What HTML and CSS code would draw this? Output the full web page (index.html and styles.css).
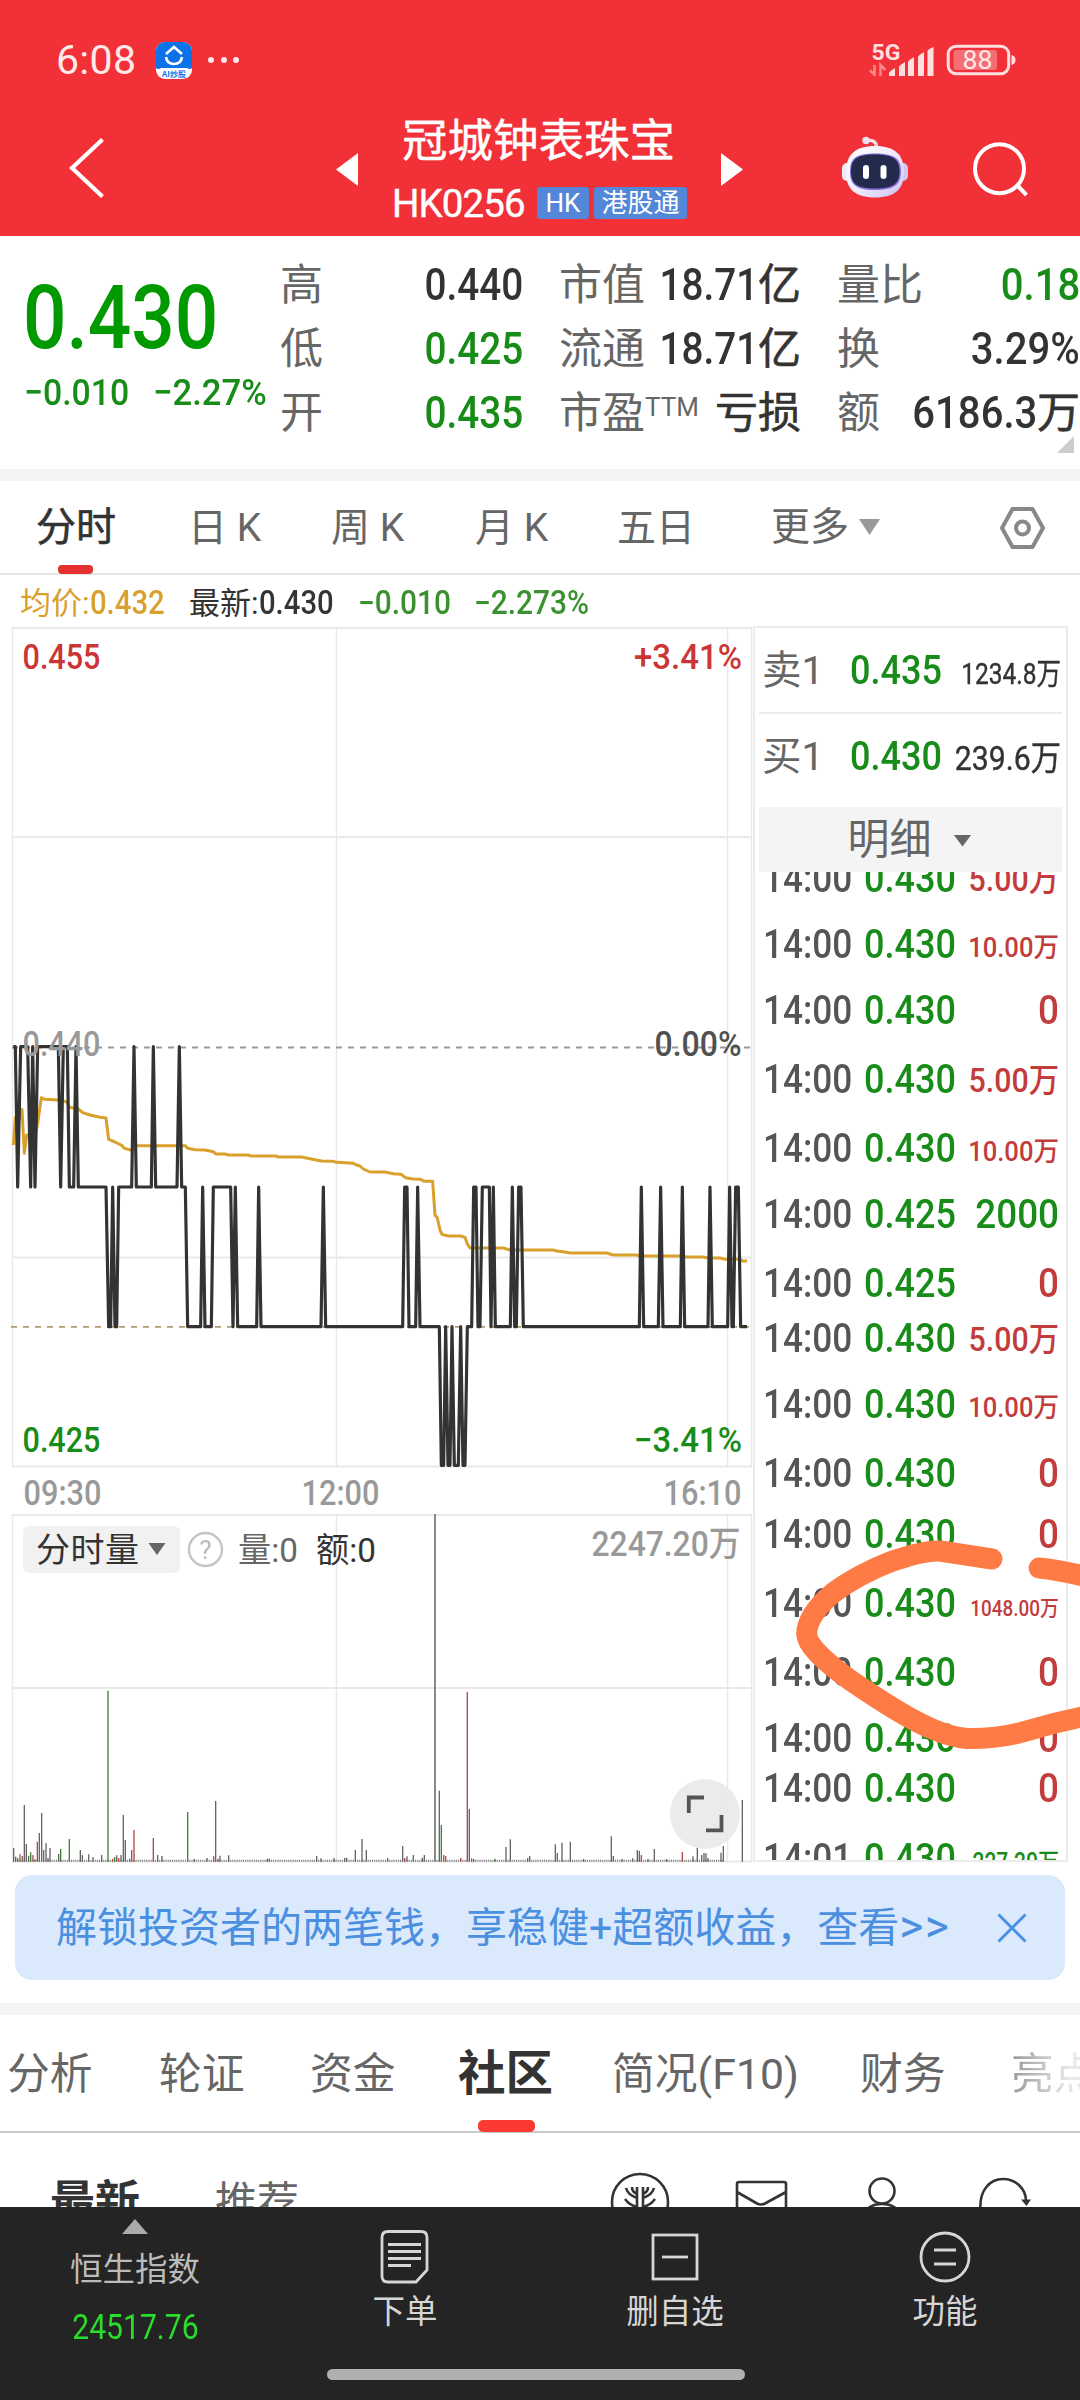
FILE: index.html
```html
<!DOCTYPE html>
<html lang="zh-CN">
<head>
<meta charset="utf-8">
<title>冠城钟表珠宝 HK0256</title>
<link rel="stylesheet" href="styles.css">
</head>
<body>
<div class="app">
  <header class="header">
    <div class="status">
      <span class="clock">6:08</span>
      <svg class="status-app" width="36" height="37" viewBox="0 0 36 37"><rect width="36" height="37" rx="9" fill="#fff"/><path d="M0 26V9a9 9 0 0 1 9-9h18a9 9 0 0 1 9 9v17q-2 2-5 0H5q-3 2-5 0z" fill="#0b72e7"/><path d="M10 12l8-7 8 7M10 15q1 7 8 7t8-7" fill="none" stroke="#fff" stroke-width="2.6"/><text x="18" y="34.5" class="tiny-label" text-anchor="middle">AI炒股</text></svg>
      <svg class="dots" width="34" height="8" viewBox="0 0 34 8" fill="#ffe9e9"><circle cx="4" cy="4" r="3"/><circle cx="17" cy="4" r="3"/><circle cx="29" cy="4" r="3"/></svg>
      <svg class="signal" width="66" height="40" viewBox="868 39 66 40" fill="#ffdfe0"><text x="871.500" y="58.500" class="net" textLength="29" lengthAdjust="spacingAndGlyphs">5G</text><path d="M870 69.500l4 3.500M874.500 64V75M880.500 75V64l5 5" stroke="#ffdfe0" stroke-width="2.600" fill="none" opacity=".5"/><path d="M889 75V72q0-1.500 6-5V75zM899 75V66q0-1.500 6-5V75zM908 75V61q0-1.500 6-5V75zM918 75V56q0-1.500 6-5V75zM927.500 75V50q0-1.500 6-4V75z"/></svg>
      <svg class="battery" width="70" height="32" viewBox="946 44 70 32"><rect x="948.200" y="46.200" width="60.500" height="27.500" rx="8" fill="none" stroke="#ffdfe0" stroke-width="3"/><rect x="953.500" y="50" width="43.500" height="20" rx="3" fill="#fff" opacity=".3"/><path d="M1011.500 55q4 1 4 5t-4 5z" fill="#ffdfe0"/><text x="962.500" y="69" class="pct" textLength="30" lengthAdjust="spacingAndGlyphs">88</text></svg>
    </div>
    <div class="titlebar">
      <svg class="back" width="42" height="62" viewBox="66 137 42 62"><path d="M102.500 139.500L72 168l30.500 28.500" fill="none" stroke="#fff" stroke-width="4.200"/></svg>
      <i class="tri-left"></i>
      <div class="title">
        <h1>冠城钟表珠宝</h1>
        <div class="code-row"><span class="code">HK0256</span><span class="tag tag-hk">HK</span><span class="tag tag-ggt">港股通</span></div>
      </div>
      <i class="tri-right"></i>
      <svg class="robot" width="68" height="66" viewBox="841 134 68 66"><defs><linearGradient id="shell" x1="0" y1="0" x2="1" y2="1"><stop offset="0" stop-color="#fff"/><stop offset=".5" stop-color="#f0ecfc"/><stop offset="1" stop-color="#cdc2f4"/></linearGradient></defs><path d="M867 140.500q9-1 9.500 6" fill="none" stroke="#f6dfea" stroke-width="3.400"/><circle cx="866" cy="140.500" r="3.700" fill="#f6dfea"/><rect x="842" y="163" width="10" height="18" rx="5" fill="#eee9fb"/><rect x="898" y="163" width="10" height="18" rx="5" fill="#cfc6f3"/><path d="M875 146C895 146 904 155 904 172C904 189 895 197.500 875 197.500C855 197.500 846 189 846 172C846 155 855 146 875 146z" fill="url(#shell)"/><path d="M875 153.500C894 153.500 901 158 901 171.500C901 185 894 190 875 190C856 190 850 185 850 171.500C850 158 856 153.500 875 153.500z" fill="#8a6fdc"/><path d="M875 154.500C893 154.500 899.500 159 899.500 171.500C899.500 184 893 188.500 875 188.500C857 188.500 851 184 851 171.500C851 159 857 154.500 875 154.500z" fill="#232b4d"/><rect x="863" y="165" width="6" height="14" rx="3" fill="#fff"/><rect x="880.500" y="165" width="6" height="14" rx="3" fill="#fff"/></svg>
      <svg class="search" width="60" height="60" viewBox="970 139 60 60" fill="none" stroke="#fff" stroke-width="4"><circle cx="999.500" cy="168.700" r="24.500"/><path d="M1016.500 184.500l10 10.500"/></svg>
    </div>
  </header>

  <section class="quote">
    <div class="quote-main">
      <div class="price"><span class="n">0.430</span></div>
      <div class="change"><span class="n chg">−0.010</span><span class="n">−2.27%</span></div>
    </div>
    <dl class="stats">
      <div class="c1"><dt>高</dt><dd><span class="n">0.440</span></dd></div>
      <div class="c2"><dt>市值</dt><dd><span class="n">18.71</span>亿</dd></div>
      <div class="c3"><dt>量比</dt><dd class="down"><span class="n">0.18</span></dd></div>
      <div class="c1"><dt>低</dt><dd class="down"><span class="n">0.425</span></dd></div>
      <div class="c2"><dt>流通</dt><dd><span class="n">18.71</span>亿</dd></div>
      <div class="c3"><dt>换</dt><dd><span class="n">3.29%</span></dd></div>
      <div class="c1"><dt>开</dt><dd class="down"><span class="n">0.435</span></dd></div>
      <div class="c2"><dt>市盈<sup>TTM</sup></dt><dd>亏损</dd></div>
      <div class="c3"><dt>额</dt><dd><span class="n">6186.3</span>万</dd></div>
    </dl>
    <i class="corner"></i>
  </section>

  <nav class="periods">
    <span class="p1 on">分时</span><span class="p2">日 K</span><span class="p3">周 K</span><span class="p4">月 K</span><span class="p5">五日</span><span class="p6">更多<i></i></span>
    <svg width="48" height="46" viewBox="0 0 48 46" fill="none" stroke="#888" stroke-width="4"><path d="M13.500 4h20L44 23 33.500 42h-20L3 23z" stroke-linejoin="round"/><circle cx="23.500" cy="23" r="6.500"/></svg>
  </nav>

  <div class="legend">
    <span class="avg">均价:<b class="n">0.432</b></span><span class="last">最新:<b class="n">0.430</b></span><span class="d1"><b class="n">−0.010</b></span><span class="d2"><b class="n">−2.273%</b></span>
  </div>

  <main class="board">
    <svg class="chart" width="753" height="1238" viewBox="0 626 753 1238">
      <g fill="none" stroke="#e9e9e9" stroke-width="2">
        <path d="M12 628H752M12 837H752M12 1257.500H752M12 1466.500H752M12 1515H752M12 1688H752M12 1861.500H752" />
        <path d="M12.500 628V1466M336.500 628V1466M727.500 628V1466M751.500 628V1466M12.500 1515V1861M336.500 1515V1861M727.500 1515V1861M751.500 1515V1861" stroke-width="1.500"/>
      </g>
      <path d="M12 1047.500H750" stroke="#999" stroke-width="1.800" stroke-dasharray="6 6"/>
      <path d="M11 1326.800H750" stroke="#b39c70" stroke-width="1.800" stroke-dasharray="6 6"/>
      <g transform="translate(0 1020) scale(.33333)" fill="none" stroke="#d9a02c" stroke-width="9" stroke-linejoin="round">
        <path d="M40 375L46 293L53 305L60 290L66 268L73 400L80 345L88 345L105 345L113 310L124 233L135 238L172 240L200 245L208 262L235 267L248 278L270 285L300 292L318 294L326 358L345 366L365 376L373 385L392 390L400 388L408 377H556L563 385L585 389L615 390L640 395L648 402H675L685 405H745L752 408H828L835 411H905L930 416L965 423L1000 424L1010 427L1060 430L1070 435L1080 438L1090 447L1110 456"/>
        <path transform="translate(1110 0)" d="M0 456H45L70 461L93 463L107 473L130 477L152 478L163 484H188L195 585L202 594L210 630L216 643L235 648H272L285 652L292 672L300 684H400L420 690H550L560 693L585 696L600 699H710L730 705H800L810 708H935L950 711H1000L1015 714H1050L1065 718H1110L1118 723H1131"/>
      </g>
      <g transform="translate(0 1020) scale(.33333)" fill="none" stroke="#333" stroke-width="9.500" stroke-linejoin="round">
        <path d="M40 80H46L53 501L62 80H83L92 501L98 80L105 501L113 80H175L182 501L190 80H202L208 501H221L228 80L235 501H318L326 920H332L338 501L345 920H350L356 501H395L402 80L409 501H454L460 80L467 501H531L538 80L545 501H556L563 920H602L608 501L615 920H634L640 501H692L699 920L706 501L713 920H770L776 501L783 920H963L970 501L977 920H1110"/>
        <path transform="translate(1110 0)" d="M0 920H98L104 501H111L117 920H137L143 501L150 920H208L214 1336H221L227 920L234 1336H240L246 920L253 1336H265L272 920L279 1336H285L292 920H305L311 501H318L324 920H330L337 501H358L363 920L370 501L376 920H421L427 501L434 920H439L446 501H453L460 920H808L814 501L821 920H865L872 501L879 920H931L937 501L944 920H1014L1020 501L1027 920H1073L1079 501L1086 920H1090L1097 501H1105L1112 920H1131"/>
      </g>
      <g class="axis">
        <text x="22.500" y="669" textLength="78" lengthAdjust="spacingAndGlyphs" fill="#cc3535">0.455</text>
        <text x="634" y="669" textLength="108" lengthAdjust="spacingAndGlyphs" fill="#cc3535">+3.41%</text>
        <text x="22.500" y="1056" textLength="78" lengthAdjust="spacingAndGlyphs" fill="#999">0.440</text>
        <text x="654.500" y="1056" textLength="87" lengthAdjust="spacingAndGlyphs" fill="#505050">0.00%</text>
        <text x="22.500" y="1452" textLength="78" lengthAdjust="spacingAndGlyphs" fill="#188c18">0.425</text>
        <text x="634" y="1452" textLength="108" lengthAdjust="spacingAndGlyphs" fill="#188c18">−3.41%</text>
        <text x="23.500" y="1505" textLength="78" lengthAdjust="spacingAndGlyphs" fill="#999">09:30</text>
        <text x="301.500" y="1505" textLength="78" lengthAdjust="spacingAndGlyphs" fill="#999">12:00</text>
        <text x="663.500" y="1505" textLength="78" lengthAdjust="spacingAndGlyphs" fill="#999">16:10</text>
        <text x="591.500" y="1556" textLength="149" lengthAdjust="spacingAndGlyphs" fill="#999">2247.20万</text>
      </g>
      <rect x="23" y="1526" width="157" height="47" rx="6" fill="#f1f1f1"/>
      <g class="vol-label">
        <text x="36" y="1562" textLength="103" fill="#333">分时量</text>
        <text x="238" y="1561.500" textLength="60" lengthAdjust="spacingAndGlyphs" fill="#666">量:0</text>
        <text x="316" y="1561.500" textLength="60" lengthAdjust="spacingAndGlyphs" fill="#333">额:0</text>
      </g>
      <path d="M148.500 1543H165.500L157 1555z" fill="#666"/>
      <circle cx="205.500" cy="1549.500" r="16.500" fill="none" stroke="#c4c4c4" stroke-width="2.400"/>
      <text x="205.500" y="1558.500" text-anchor="middle" class="help">?</text>
      <g transform="translate(0 1490) scale(.33333)" fill="none" stroke-width="4">
        <path stroke="#777" stroke-width="6" stroke-dasharray="3 3.450" d="M39 1112.500H2170"/>
        <path stroke="#666" d="M41 1115V1074M47 1115V1100M67 1115V1098M73 1115V945M79 1115V1062M86 1115V1097M105 1115V1108M118 1115V1029M125 1115V969M131 1115V1080M138 1115V1060M144 1115V1104M150 1115V1074M176 1115V1092M241 1115V1080M247 1115V1095M266 1115V1093M279 1115V1101M305 1115V1095M350 1115V1096M363 1115V1095M370 1115V975M376 1115V1050M389 1115V1106M473 1115V1095M486 1115V1098M583 1115V1107M621 1115V1104M647 1115V933M654 1115V1106M660 1115V1097M686 1115V1096M802 1115V1106M808 1115V1106M950 1115V1098M963 1115V1105M1002 1115V1104M1034 1115V1104M1040 1115V1103M1066 1115V1080M1086 1115V1047M1099 1115V1080"/>
        <path stroke="#3f8436" d="M53 1115V1104M92 1115V1087M182 1115V1077M208 1115V1047M324 1115V602M344 1115V1101M563 1115V966M1324 1115V1005M1485 1115V1106"/>
        <path stroke="#b04a4a" d="M60 1115V1093M99 1115V1095M112 1115V1055M338 1115V1106M356 1115V1104M395 1115V1080M402 1115V1020M460 1115V1044M641 1115V1099M1214 1115V1104M1331 1115V1095M1337 1115V1098M1382 1115V1104M1402 1115V606M1421 1115V1107M1924 1115V1095M2047 1115V1086"/>
        <path transform="translate(1110 0)" stroke="#666" d="M53 1115V1104M98 1115V1068M111 1115V1099M130 1115V1095M157 1115V1103M163 1115V1095M208 1115V902M298 1115V957M305 1115V1105M408 1115V1071M421 1115V1048M473 1115V1104M479 1115V1098M556 1115V1063M562 1115V1089M576 1115V1058M601 1115V1055M641 1115V1107M724 1115V1039M730 1115V1098M756 1115V1107M788 1115V1105M802 1115V1080M808 1115V1083M834 1115V1107M853 1115V1077M890 1115V1107M969 1115V1099M982 1115V1073M995 1115V1095M1002 1115V1089M1008 1115V1090M1014 1115V1104M1053 1115V1088M1060 1115V1068M1117 1115V930"/>
        <path stroke="#8a8a8a" stroke-width="6" d="M1305 1115V72"/>
      </g>
      <circle cx="705" cy="1814" r="35" fill="#e8e8e8" opacity=".88"/>
      <path d="M688.800 1813V1797.500H704M721.500 1815V1830.300H706" fill="none" stroke="#555" stroke-width="3.800"/>
    </svg>

    <aside class="orders">
      <div class="level sell"><span class="side">卖1</span><span class="lp"><b class="n">0.435</b></span><span class="lv lv-s">1234.8万</span></div>
      <div class="level buy"><span class="side">买1</span><span class="lp"><b class="n">0.430</b></span><span class="lv">239.6万</span></div>
      <div class="detail">明细<i></i></div>
      <div class="ticks">
        <div><span>14:00</span><b>0.430</b><em class="m">5.00万</em></div>
        <div><span>14:00</span><b>0.430</b><em class="s">10.00万</em></div>
        <div><span>14:00</span><b>0.430</b><em>0</em></div>
        <div><span>14:00</span><b>0.430</b><em class="m">5.00万</em></div>
        <div><span>14:00</span><b>0.430</b><em class="s">10.00万</em></div>
        <div><span>14:00</span><b>0.425</b><em class="g">2000</em></div>
        <div><span>14:00</span><b>0.425</b><em>0</em></div>
        <div><span>14:00</span><b>0.430</b><em class="m">5.00万</em></div>
        <div><span>14:00</span><b>0.430</b><em class="s">10.00万</em></div>
        <div><span>14:00</span><b>0.430</b><em>0</em></div>
        <div><span>14:00</span><b>0.430</b><em>0</em></div>
        <div><span>14:00</span><b>0.430</b><em class="xs">1048.00万</em></div>
        <div><span>14:00</span><b>0.430</b><em>0</em></div>
        <div><span>14:00</span><b>0.430</b><em>0</em></div>
        <div><span>14:00</span><b>0.430</b><em>0</em></div>
        <div><span>14:01</span><b>0.430</b><em class="g t">227.20万</em></div>
      </div>
    </aside>
    <svg class="scribble" width="290" height="210" viewBox="790 1540 290 210" fill="none" stroke="#ff7b45" stroke-width="21" stroke-linecap="round" stroke-linejoin="round"><path d="M992 1559L940 1551Q924 1550 890 1562Q857 1575 833 1593Q807 1615 806.700 1634Q807 1649 850 1680Q904 1717 930 1728Q950 1737 967 1738.500Q1000 1739 1030 1730Q1060 1721 1092 1715"/><path d="M1039 1568Q1060 1570 1092 1578"/></svg>
  </main>

  <div class="banner"><span>解锁投资者的两笔钱，享稳健+超额收益，查看<b>&gt;&gt;</b></span><svg width="30" height="30" viewBox="0 0 30 30" fill="none" stroke="#4a8fe0" stroke-width="3"><path d="M1.500 1.500l27 27M28.500 1.500l-27 27"/></svg></div>

  <nav class="sections">
    <span class="s1">分析</span><span class="s2">轮证</span><span class="s3">资金</span><span class="s4 on">社区</span><span class="s5">简况(F10)</span><span class="s6">财务</span><span class="s7">亮点</span>
  </nav>

  <div class="feed">
    <span class="f1">最新</span><span class="f2">推荐</span>
    <svg width="470" height="36" viewBox="600 2171 470 36" fill="none" stroke="#333" stroke-width="2.600"><circle cx="640" cy="2202" r="28"/><path d="M637 2187V2207M643 2187V2207M637 2198Q628 2195 626 2188M643 2198Q652 2195 654 2188M637 2207Q629 2205 625 2199M643 2207Q651 2205 655 2199M632 2187q0 5 5 7M648 2187q0 5-5 7"/><path d="M737 2215V2184q0-2 2-2h45q2 0 2 2V2215M737 2192L757 2203.500q4 2 8 0L786 2192"/><circle cx="882" cy="2191" r="12.500"/><path d="M864 2217q2-13 18-13t18 13"/><path d="M980.500 2210C979 2190 990 2179 1003 2179C1016 2179 1026 2189 1026 2201"/><path d="M1021 2199.500h10l-4.500 6.500z" fill="#333" stroke="none"/></svg>
  </div>

  <footer class="dock">
    <div class="index"><i></i><span class="iname">恒生指数</span><span class="ival">24517.76</span></div>
    <div class="act"><svg width="52" height="56" viewBox="380 2229 52 56" fill="none" stroke="#d6d6d6" stroke-width="2.800"><path d="M389 2231.500H422q6 0 6 6V2270L417 2282H389q-6 0-6-6V2237.500q0-6 6-6z"/><path d="M389 2244.500H422M389 2251.500H422M389 2258.500H422M389 2265.500H412"/></svg><span>下单</span></div>
    <div class="act"><svg width="52" height="56" viewBox="649 2229 52 56" fill="none" stroke="#d6d6d6" stroke-width="2.800"><rect x="653" y="2235" width="44" height="44"/><path d="M662 2257h26"/></svg><span>删自选</span></div>
    <div class="act"><svg width="52" height="56" viewBox="919 2229 52 56" fill="none" stroke="#d6d6d6" stroke-width="2.800"><circle cx="945" cy="2257" r="24"/><path d="M934 2250h22M934 2264h22"/></svg><span>功能</span></div>
    <i class="home"></i>
  </footer>
</div>
</body>
</html>
```
FILE: styles.css
```css
* { box-sizing: border-box; margin: 0; padding: 0; }
body { width: 1080px; height: 2400px; overflow: hidden; background: #fff; font-family: Roboto, "Noto Sans CJK SC", sans-serif; color: #333; }
i, em { font-style: normal; }
svg { display: block; flex: none; }
.app { width: 1080px; height: 2400px; display: flex; flex-direction: column; overflow: hidden; }
.app > * { flex: none; }
.n { display: inline-block; font-weight: 500; transform: scaleX(.9); transform-origin: left; }

/* header */
.header { height: 236px; background: #f13038; color: #fff; }
.status { display: flex; align-items: center; height: 120px; padding: 0 64px 0 56px; }
.clock { width: 100px; font-size: 41px; letter-spacing: .3px; color: #ffe9e9; }
.tiny-label { font: bold 8px "Noto Sans CJK SC", sans-serif; fill: #0b72e7; }
.dots { margin-left: 15px; }
.signal { margin-left: auto; }
.net { font: 700 22px Roboto, sans-serif; }
.pct { font: 400 25.5px Roboto, sans-serif; fill: #ffe9e9; }
.battery { margin-left: 12px; margin-right: 0; }
.titlebar { display: flex; height: 116px; }
.back { margin: 17px 0 0 66px; }
.tri-left { margin: 33px 0 0 228px; width: 22px; height: 33px; background: #fff; clip-path: polygon(100% 0, 100% 100%, 0 50%); }
.tri-right { margin: 33px 0 0 0; width: 22px; height: 33px; background: #fff; clip-path: polygon(0 0, 100% 50%, 0 100%); }
.title { width: 363px; }
.title h1 { font-size: 45.5px; font-weight: 400; line-height: 50px; margin: -3px 0 0 44px; height: 64px; white-space: nowrap; -webkit-text-stroke: .4px #fff; }
.code-row { display: flex; align-items: flex-start; padding-left: 34px; height: 40px; margin-top: 4px; }
.code { width: 145px; font-size: 38.5px; line-height: 38px; letter-spacing: -.9px; -webkit-text-stroke: .4px #fff; }
.tag { height: 32px; line-height: 33px; margin-top: 2px; border-radius: 3px; background: #5487d8; font-size: 26px; text-align: center; }
.tag-hk { width: 52px; margin-right: 5px; }
.tag-ggt { width: 93px; }
.robot { margin: 14px 0 0 98px; }
.search { margin: 19px 0 0 61px; }

/* quote */
.quote { position: relative; display: flex; height: 245px; border-bottom: 12px solid #f4f4f4; }
.quote-main { width: 280px; padding-left: 23px; color: #090; }
.price { height: 134px; padding-top: 30px; font-size: 89px; line-height: 104px; white-space: nowrap; }
.price .n { transform: scaleX(.86); }
.change { display: flex; font-size: 37.5px; line-height: 44px; color: #188c18; padding-left: 1px; white-space: nowrap; }
.chg { width: 129px; }
.change .n { transform: scaleX(.925); }
.change .chg { transform: scaleX(.9); margin-right: 0; }
.stats { display: grid; grid-template-columns: 279px 278px 243px; grid-auto-rows: 64px; margin-top: 16px; font-size: 43px; line-height: 66px; }
.stats > div { display: flex; justify-content: space-between; white-space: nowrap; }
.c1 { padding-right: 36px; }
.c2 { padding-right: 36px; }
.stats dt { color: #666; font-weight: 400; }
.stats sup { font-size: 26px; line-height: 1; vertical-align: 12px; font-weight: 400; }
.stats dd { font-weight: 400; -webkit-text-stroke: .6px currentColor; }
.stats .n { font-size: 44px; transform: scaleX(.88); transform-origin: right; -webkit-text-stroke: 0; }
.stats .c3 .n { transform: scaleX(.91); }
.down { color: #188c18; }
.corner { position: absolute; right: 6px; bottom: 16px; width: 17px; height: 17px; background: #ccc; clip-path: polygon(100% 0, 100% 100%, 0 100%); }

/* chart periods */
.periods { display: flex; height: 94px; border-bottom: 2px solid #e6e6e6; padding-left: 36px; font-size: 39px; line-height: 94px; color: #666; white-space: nowrap; }
.periods span { display: block; }
.p1 { width: 152px; }
.p2 { width: 143px; }
.p3 { width: 144px; }
.p4 { width: 142px; }
.p5 { width: 154px; }
.p6 { display: flex !important; width: 227px; align-items: center; height: 92px; }
.p6 i { width: 21px; height: 16px; margin-left: 10px; background: #999; clip-path: polygon(0 0, 100% 0, 50% 100%); }
.periods .on { position: relative; color: #333; font-size: 40px; -webkit-text-stroke: .6px #333; }
.periods .on::after { content: ""; position: absolute; left: 22px; top: 84px; width: 35px; height: 9px; border-radius: 4px; background: #e53030; }
.periods svg { margin: 24px 0 0 1px; }

/* legend */
.legend { display: flex; height: 51px; padding-left: 20px; font-size: 31px; line-height: 56px; white-space: nowrap; }
.legend .n { font-size: 32.5px; transform: scaleX(.92); }
.legend span { display: block; }
.legend .avg .n, .legend .last .n { transform: scaleX(.9); }
.avg { width: 169px; color: #d9a02c; }
.last { width: 169px; }
.d1 { width: 116px; color: #3b9130; }
.d2 { color: #3b9130; }

/* board */
.board { position: relative; display: flex; height: 1249px; }
.axis { font: 500 35px Roboto, "Noto Sans CJK SC", sans-serif; }
.vol-label { font: 400 34px Roboto, "Noto Sans CJK SC", sans-serif; }
.help { font: 26px Roboto, sans-serif; fill: #bbb; }
.orders { width: 315px; height: 1236px; border: 2px solid #ebebeb; padding: 0 4px; overflow: hidden; }
.level { display: flex; align-items: baseline; height: 86px; line-height: 86px; white-space: nowrap; padding-left: 3px; }
.sell { height: 86px; border-bottom: 2px solid #ececec; }
.buy { height: 93px; }
.side { flex: none; width: 88px; font-size: 39.5px; color: #666; }
.lp { flex: none; width: 99px; font-size: 40px; color: #188c18; }
.lv { flex: none; width: 112px; display: flex; justify-content: flex-end; font-size: 34px; transform: scaleX(.89); transform-origin: right; -webkit-text-stroke: .4px #333; }
.lv-s { font-size: 29.5px; transform: scaleX(.83); }
.detail { display: flex; align-items: center; justify-content: center; height: 65px; line-height: 60px; padding: 0 2px 0 0; background: #f4f4f4; font-size: 42px; color: #666; }
.detail i { width: 18px; height: 12px; margin: 2px 0 0 22px; background: #666; clip-path: polygon(0 0, 100% 0, 50% 100%); }
.ticks { display: grid; grid-template-rows: 21px 66px 66px 69px 69px 66px 69px 55px 66px 69px 61px 69px 69px 66px 50px 70px; height: 988px; overflow: hidden; }
.ticks > div { display: flex; align-items: flex-end; height: 100%; line-height: 28px; white-space: nowrap; font-size: 40px; font-weight: 500; padding-left: 4px; }
.ticks span { flex: none; width: 101px; color: #555; font-weight: 500; transform: scaleX(.88); transform-origin: left; }
.ticks b { flex: none; width: 98px; color: #188c18; font-weight: 500; transform: scaleX(.9); transform-origin: left; }
.ticks em { flex: none; width: 97px; display: flex; justify-content: flex-end; color: #c23c3c; transform: scaleX(.92); transform-origin: right; }
.ticks em.m { font-size: 33px; transform: translateY(1px) scaleX(.92); }
.ticks em.s { font-size: 27.5px; transform: translateY(3px) scaleX(.93); }
.ticks em.xs { font-size: 22px; transform: translateY(5px) scaleX(.86); }
.ticks em.t { font-size: 25px; transform: translateY(4px) scaleX(.84); }
.ticks em.g { color: #188c18; }
.scribble { position: absolute; left: 790px; top: 914px; }

/* banner */
.banner { display: flex; align-items: center; width: 1050px; height: 105px; margin: 0 15px 23px; padding-left: 41px; border-radius: 17px; background: #dae9fb; color: #4a8fe0; font-size: 41px; line-height: 105px; white-space: nowrap; }
.banner span { width: 941px; padding-top: 2px; }
.banner b { font-weight: 400; font-size: 46px; line-height: 1; letter-spacing: 1.5px; }

/* section tabs */
.sections { display: flex; height: 130px; border-top: 12px solid #f4f4f4; border-bottom: 2px solid #ccc; line-height: 118px; font-size: 42.8px; color: #666; white-space: nowrap; padding-left: 7px; }
.sections span { display: block; height: 116px; }
.s1 { width: 152px; }
.s2 { width: 151px; }
.s3 { width: 148px; }
.s4 { width: 154px; }
.s5 { width: 248px; }
.s6 { width: 151px; }
.s7 { width: 69px; overflow: hidden; background: linear-gradient(90deg, #999, #e8e8e8 85%); -webkit-background-clip: text; background-clip: text; color: transparent; }
.sections .on { position: relative; color: #333; font-weight: 700; font-size: 47.5px; }
.sections .on::after { content: ""; position: absolute; left: 20px; top: 105px; width: 57px; height: 12px; border-radius: 5px; background: #fb3b31; }

/* feed */
.feed { display: flex; height: 74px; overflow: hidden; padding-left: 50px; line-height: 60px; white-space: nowrap; }
.feed span { padding-top: 40px; }
.f1 { width: 165px; font-size: 45px; font-weight: 700; }
.f2 { width: 385px; font-size: 42px; color: #666; }
.feed svg { margin-top: 38px; }

/* dock */
.dock { position: relative; display: grid; grid-template-columns: repeat(4, 270px); height: 193px; background: #242424; color: #d6d6d6; font-size: 32.5px; }
.index { display: flex; flex-direction: column; align-items: center; color: #bbb; }
.index i { width: 26px; height: 15px; margin-top: 12px; background: #aaa; clip-path: polygon(50% 0, 100% 100%, 0 100%); }
.iname { line-height: 40px; margin-top: 16px; }
.ival { color: #2bdd2b; font-size: 35px; line-height: 40px; margin-top: 18px; transform: scaleX(.86); }
.act { display: flex; flex-direction: column; align-items: center; padding-top: 22px; }
.act span { line-height: 40px; margin-top: 7px; }
.home { position: absolute; left: 327px; top: 162px; width: 418px; height: 11px; border-radius: 6px; background: #b0b0b0; }
```
